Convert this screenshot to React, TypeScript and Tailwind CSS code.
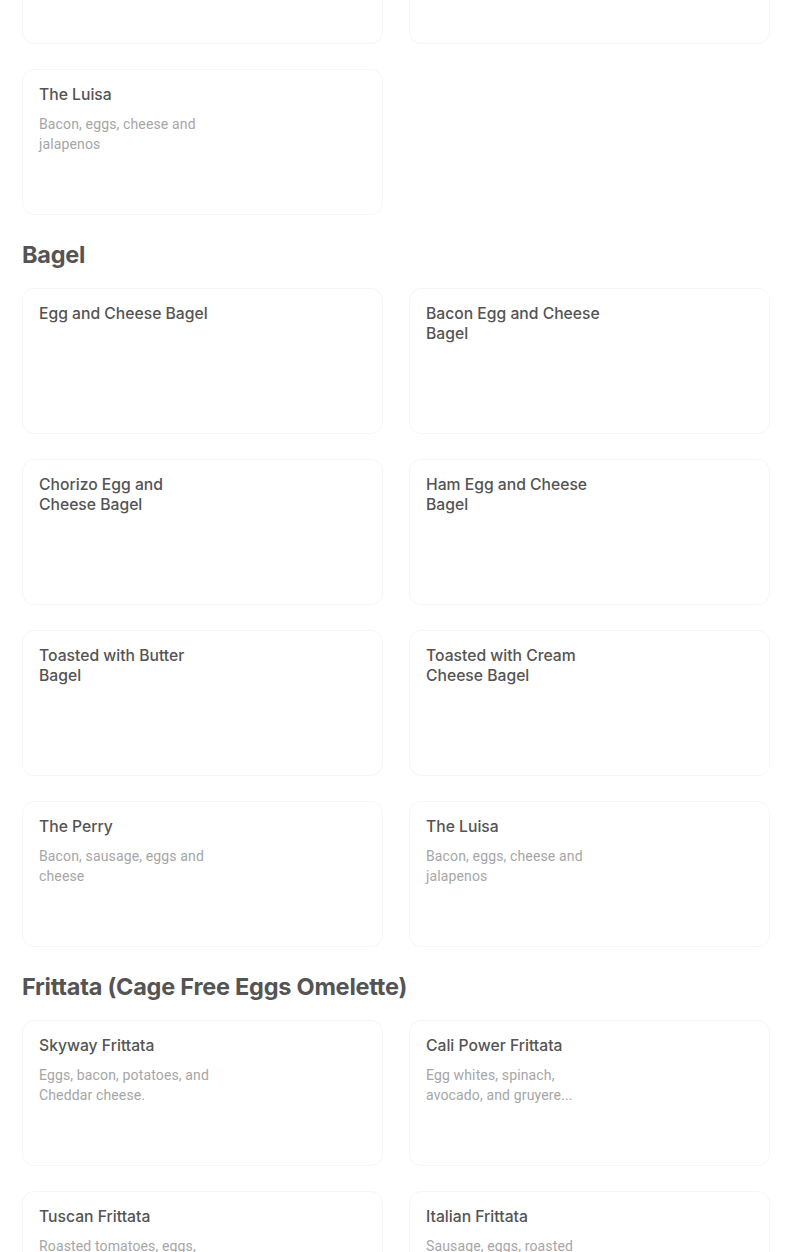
type Item = { name: string; desc?: string }

const sections: { title?: string; items: Item[] }[] = [
  {
    items: [
      { name: "" },
      { name: "" },
      { name: "The Luisa", desc: "Bacon, eggs, cheese and jalapenos" },
    ],
  },
  {
    title: "Bagel",
    items: [
      { name: "Egg and Cheese Bagel" },
      { name: "Bacon Egg and Cheese Bagel" },
      { name: "Chorizo Egg and Cheese Bagel" },
      { name: "Ham Egg and Cheese Bagel" },
      { name: "Toasted with Butter Bagel" },
      { name: "Toasted with Cream Cheese Bagel" },
      { name: "The Perry", desc: "Bacon, sausage, eggs and cheese" },
      { name: "The Luisa", desc: "Bacon, eggs, cheese and jalapenos" },
    ],
  },
  {
    title: "Frittata (Cage Free Eggs Omelette)",
    items: [
      { name: "Skyway Frittata", desc: "Eggs, bacon, potatoes, and Cheddar cheese." },
      { name: "Cali Power Frittata", desc: "Egg whites, spinach, avocado, and gruyere..." },
      { name: "Tuscan Frittata", desc: "Roasted tomatoes, eggs, and mozzarella cheese." },
      { name: "Italian Frittata", desc: "Sausage, eggs, roasted peppers and provolone." },
    ],
  },
]

function MenuCard({ item }: { item: Item }) {
  return (
    <div className="h-[146px] rounded-xl border border-[#f6f6f6] bg-white px-4 pt-[15px]">
      <div className="max-w-[182px]">
        {item.name && (
          <div
            className="text-[15.7px] leading-5 font-medium text-[#545454]"
            style={{ fontFamily: "Inter, sans-serif" }}
          >
            {item.name}
          </div>
        )}
        {item.desc && (
          <div className="mt-[9px] text-[14px] leading-5 text-[#a6a6a6] tracking-[0.01em]">{item.desc}</div>
        )}
      </div>
    </div>
  )
}

export default function App() {
  return (
    <div className="min-h-screen bg-white overflow-hidden" style={{ fontFamily: "Roboto, 'Noto Sans', sans-serif" }}>
      <div className="ml-[22px] w-[748px] mt-[-102px]">
        {sections.map((s, i) => (
          <div key={i} className={i > 0 ? "mt-6" : ""}>
            {s.title && (
              <h2
                className="text-[23.5px] leading-8 font-bold text-[#545454] mb-[17px] tracking-[-0.01em]"
                style={{ fontFamily: "Inter, sans-serif" }}
              >
                {s.title}
              </h2>
            )}
            <div className="grid grid-cols-2 gap-x-[26px] gap-y-[25px]">
              {s.items.map((it, j) => (
                <MenuCard key={j} item={it} />
              ))}
            </div>
          </div>
        ))}
      </div>
    </div>
  )
}
